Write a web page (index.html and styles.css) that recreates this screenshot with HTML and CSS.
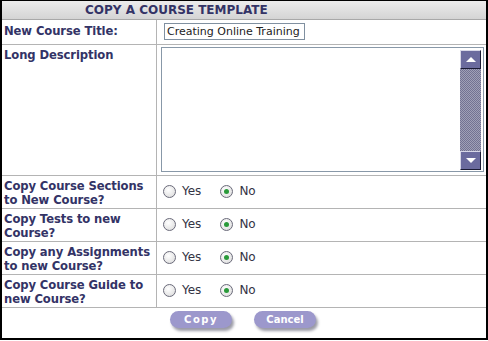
FILE: index.html
```html
<!DOCTYPE html>
<html lang="en">
<head>
    <meta charset="UTF-8">
    <title>Copy a Course Template</title>
    <link rel="stylesheet" href="styles.css">
</head>
<body>
    <div id="copyBox">
        <div class="box-title">COPY A COURSE TEMPLATE</div>

        <div class="form-row row-title">
            <label class="row-label" for="courseTitle">New Course Title:</label>
            <div class="row-value">
                <input type="text" id="courseTitle" class="input-title" value="Creating Online Training">
            </div>
        </div>

        <div class="form-row row-desc">
            <label class="row-label" for="longDesc">Long Description</label>
            <div class="row-value">
                <div class="desc-box">
                    <textarea id="longDesc"></textarea>
                    <!-- fake scrollbar, old skin style -->
                    <div class="scroll-bar">
                        <span class="scroll-btn"><span class="arrow-up"></span></span>
                        <span class="scroll-track"></span>
                        <span class="scroll-btn"><span class="arrow-down"></span></span>
                    </div>
                </div>
            </div>
        </div>

        <div class="form-row row-opt">
            <div class="row-label">Copy Course Sections to New Course?</div>
            <div class="row-value radios">
                <label><input type="radio" name="copySections"> Yes</label>
                <label><input type="radio" name="copySections" checked> No</label>
            </div>
        </div>

        <div class="form-row row-opt">
            <div class="row-label">Copy Tests to new Course?</div>
            <div class="row-value radios">
                <label><input type="radio" name="copyTests"> Yes</label>
                <label><input type="radio" name="copyTests" checked> No</label>
            </div>
        </div>

        <div class="form-row row-opt">
            <div class="row-label">Copy any Assignments to new Course?</div>
            <div class="row-value radios">
                <label><input type="radio" name="copyAssign"> Yes</label>
                <label><input type="radio" name="copyAssign" checked> No</label>
            </div>
        </div>

        <div class="form-row row-opt">
            <div class="row-label">Copy Course Guide to new Course?</div>
            <div class="row-value radios">
                <label><input type="radio" name="copyGuide"> Yes</label>
                <label><input type="radio" name="copyGuide" checked> No</label>
            </div>
        </div>

        <div class="button-row">
            <button class="pill-btn btn-copy">Copy</button>
            <button class="pill-btn">Cancel</button>
        </div>
    </div>
</body>
</html>
```

FILE: styles.css
```css
body {
    margin: 0;
    padding: 0;
    background-color: white;
    font-family: "DejaVu Sans", Verdana, sans-serif;
}

#copyBox {
    width: 484px;
    height: 337px;
    border: 2px solid #000;
    border-top-width: 1px;
    background-color: white;
    display: flex;
    flex-direction: column;
}

.box-title {
    height: 18px;
    line-height: 18px;
    padding-left: 83px;
    font-size: 12px;
    font-weight: bold;
    color: #333366;
    background: linear-gradient(#ececec, #d4d4d4);
    border-bottom: 1px solid #a8a8a8;
}

.form-row {
    display: grid;
    grid-template-columns: 155px 1fr;
    border-bottom: 1px solid #b4b4b4;
}

.row-label {
    padding: 3px 0 0 2px;
    font-size: 11.6px;
    font-weight: bold;
    letter-spacing: -0.1px;
    line-height: 14px;
    color: #333366;
    border-right: 1px solid #b4b4b4;
}

.row-value {
    padding-left: 4px;
}

.row-title {
    height: 24px;
}

.row-title .row-label {
    padding-top: 4px;
}

.input-title {
    margin: 3px 0 0 3px;
    width: 135px;
    height: 13px;
    padding: 1px 2px;
    font-family: inherit;
    font-size: 11px;
    color: #222;
    border: 1px solid #8090a0;
}

.row-desc {
    height: 130px;
}

.row-desc .row-label {
    padding-top: 3px;
}

.desc-box {
    margin-top: 2px;
    width: 321px;
    height: 123px;
    border: 1px solid #8898a8;
    display: flex;
}

.desc-box textarea {
    flex: 1;
    border: none;
    resize: none;
    outline: none;
}

.scroll-bar {
    width: 21px;
    padding: 2px 2px 1px 0;
    display: flex;
    flex-direction: column;
}

.scroll-btn {
    height: 17px;
    background-color: #6b6b9e;
    border: 1px solid #d8d8e8;
    border-right-color: #1a1a33;
    border-bottom-color: #1a1a33;
    display: flex;
    align-items: center;
    justify-content: center;
}

.scroll-track {
    flex: 1;
    background-color: #8a8aa4;
    background-image: repeating-conic-gradient(#727292 0 25%, #a0a0b6 0 50%);
    background-size: 2px 2px;
}

.arrow-up {
    width: 0;
    height: 0;
    border-left: 5px solid transparent;
    border-right: 5px solid transparent;
    border-bottom: 5px solid white;
}

.arrow-down {
    width: 0;
    height: 0;
    border-left: 5px solid transparent;
    border-right: 5px solid transparent;
    border-top: 5px solid white;
}

.row-opt {
    height: 32px;
}

.radios {
    display: flex;
    align-items: center;
    gap: 19px;
    padding-left: 6px;
    padding-bottom: 2px;
    font-size: 12px;
    color: #333344;
}

.radios label {
    display: flex;
    align-items: center;
    gap: 6px;
}

.radios input {
    appearance: none;
    margin: 0;
    width: 13px;
    height: 13px;
    border-radius: 50%;
    border: 1px solid #6a6a7a;
    background: radial-gradient(circle at 40% 35%, #ffffff, #d8d8d8);
    display: flex;
    align-items: center;
    justify-content: center;
}

.radios input:checked::after {
    content: "";
    width: 5px;
    height: 5px;
    border-radius: 50%;
    background-color: #2a9a3a;
}

.button-row {
    display: flex;
    gap: 22px;
    padding: 3px 0 0 168px;
}

.pill-btn {
    width: 62px;
    height: 17px;
    padding: 0;
    font-family: inherit;
    font-size: 10px;
    font-weight: bold;
    color: white;
    background-color: #9c98cc;
    border: none;
    border-radius: 9px;
    box-shadow: 2px 3px 3px #9a9aa6;
    cursor: pointer;
}

.btn-copy {
    letter-spacing: 1.5px;
}
```
